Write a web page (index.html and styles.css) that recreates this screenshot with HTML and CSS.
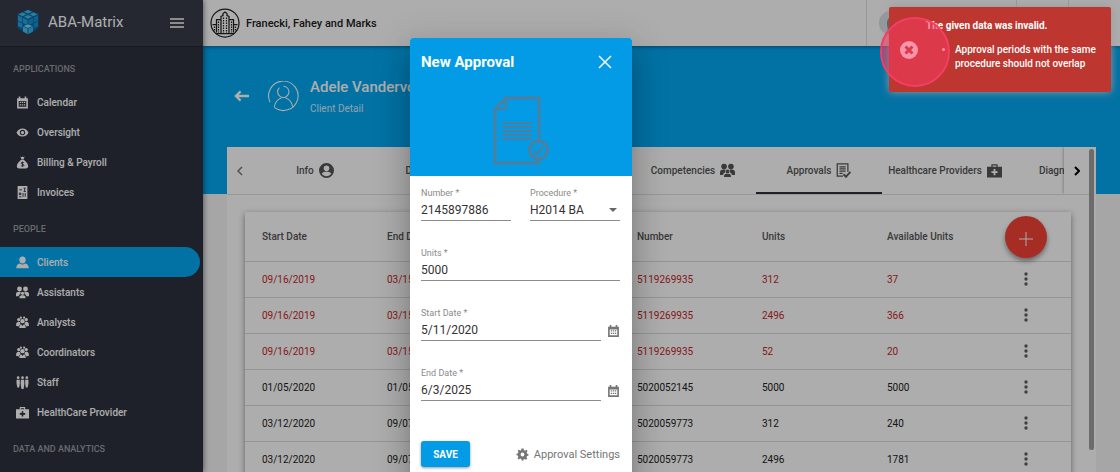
FILE: index.html
```html
<!DOCTYPE html>
<html lang="en">
<head>
  <meta charset="UTF-8" />
  <meta name="viewport" content="width=device-width, initial-scale=1.0"/>
  <title>ABA-Matrix - Client Detail</title>
  <link rel="stylesheet" href="styles.css">
</head>
<body>

  <!-- Icon set -->
  <svg class="icon-set" aria-hidden="true">
    <symbol id="i-calendar" viewBox="0 0 24 24">
      <path fill-rule="evenodd" d="M5 1h3v3h8V1h3v3h3v19H2V4h3zM5 9v11h14V9zM7 10.500h2.500v2.500H7zm3.800 0h2.500v2.500h-2.500zm3.800 0h2.500v2.500h-2.500zM7 15h2.500v2.500H7zm3.800 0h2.500v2.500h-2.500zm3.800 0h2.500v2.500h-2.500z"/>
    </symbol>
    <symbol id="i-eye" viewBox="0 0 24 24">
      <path fill-rule="evenodd" d="M12 4.500C7 4.500 2.700 7.600 1 12c1.700 4.400 6 7.500 11 7.500s9.300-3.100 11-7.500c-1.700-4.400-6-7.500-11-7.500zM12 17a5 5 0 1 1 0-10 5 5 0 0 1 0 10zm0-8a3 3 0 1 0 0 6 3 3 0 0 0 0-6z"/>
    </symbol>
    <symbol id="i-money" viewBox="0 0 24 24">
      <path d="M8 1l2 1.500L12 1l2 1.500L16 1l-2 5h-4zM9.500 7h5c5 4 8 8 8 12 0 3-2 4-4.500 4H6c-2.500 0-4.500-1-4.500-4 0-4 3-8 8-12z"/>
      <path d="M14.500 12.500c-1-1.200-5-1.400-5 .8 0 2.400 5.200 1.200 5.200 3.700 0 2.300-4.200 2.200-5.400.7M12 10.500v9.500" fill="none" stroke="#2d323e" stroke-width="1.600"/>
    </symbol>
    <symbol id="i-invoice" viewBox="0 0 24 24">
      <path d="M3 0h18v24H3z"/>
      <path d="M6 7h5M14 4h4M16 4v6M14 10h4M6 13h3v3H6zM13 13v7M17 13v7M6 20h4" fill="none" stroke="#2d323e" stroke-width="1.700"/>
    </symbol>
    <symbol id="i-person" viewBox="0 0 24 24">
      <path d="M12 1c4 0 6 3 6 6.500S15.500 14 12 14 6 11 6 7.500 8 1 12 1zM7 14c3 2.500 7 2.500 10 0 4 1 6.500 3 6.500 8.500H.5C.5 17 3 15 7 14z"/>
    </symbol>
    <symbol id="i-people" viewBox="0 0 24 24">
      <circle cx="6.500" cy="5.500" r="4.500"/><circle cx="17.500" cy="5.500" r="4.500"/>
      <path d="M0 19v-4c0-3 2-4.500 6-4.500 1 0 2 .2 3 .7a4 4 0 0 0-1 3.800c-2 .8-3 2-3 4zM24 19v-4c0-3-2-4.500-6-4.500-1 0-2 .2-3 .7a4 4 0 0 1 1 3.800c2 .8 3 2 3 4z"/>
      <circle cx="12" cy="13.500" r="3"/><path d="M6.500 22.500v-2c0-2.300 2-3.300 5.500-3.300s5.500 1 5.500 3.300v2z"/>
    </symbol>
    <symbol id="i-group" viewBox="0 0 24 24">
      <circle cx="5" cy="6.500" r="3"/><circle cx="19" cy="6.500" r="3"/><circle cx="12" cy="9.500" r="4"/>
      <circle cx="9" cy="3" r="2"/><circle cx="15" cy="3" r="2"/>
      <path d="M0 18c0-5 1.500-7.500 5-7.500 1 0 2 .3 2.500 1 0 2 .5 2.500 1 3.500-2 1-3 2.500-3.500 4.500zM24 18c0-5-1.500-7.500-5-7.500-1 0-2 .3-2.500 1 0 2-.5 2.500-1 3.500 2 1 3 2.500 3.500 4.500zM6 22c0-4 1.500-6.500 4-6.500l2 3 2-3c2.500 0 4 2.500 4 6.500z"/>
    </symbol>
    <symbol id="i-staff" viewBox="0 0 24 24">
      <circle cx="4" cy="3" r="2.500"/><circle cx="12" cy="3" r="2.500"/><circle cx="20" cy="3" r="2.500"/>
      <path d="M1 7h6v7l-1 7H2.500L1 14zM9 7h6l.5 7-1.500 10h-4L8.500 14zM17 7h6v7l-1.500 7H18l-1-7z"/>
    </symbol>
    <symbol id="i-medkit" viewBox="0 0 24 24">
      <path fill-rule="evenodd" d="M7 6V2h10v4h7v17H0V6zM9 6h6V4H9zM10.500 9.500v3.500H7v3h3.500v3.500h3V16H17v-3h-3.500V9.500z"/>
    </symbol>
    <symbol id="i-account" viewBox="0 0 24 24">
      <path fill-rule="evenodd" d="M12 0a12 12 0 1 0 0 24 12 12 0 0 0 0-24zm0 4a4.500 4.500 0 1 1 0 9 4.500 4.500 0 0 1 0-9zm0 17c-3 0-6-1.500-7.500-4 .5-2 4-3 7.500-3s7 1 7.500 3c-1.500 2.500-4.500 4-7.500 4z"/>
    </symbol>
    <symbol id="i-approvals" viewBox="0 0 24 24">
      <path d="M11 21H2V1.500h17V14M5.500 6h10M5.500 9.500h10M5.500 13h10M5.500 16.500h5" fill="none" stroke="currentColor" stroke-width="2"/>
      <path d="M12 18l4 4 7-8" fill="none" stroke="currentColor" stroke-width="3"/>
    </symbol>
    <symbol id="i-gear" viewBox="0 0 24 24">
      <path fill-rule="evenodd" d="M10 1h4l.6 3 2.200 1L19.300 3.300l2 2.400-1.600 2.500.9 2.300L23 11v3l-2.600.7-1 2.200 1.500 2.500-2.500 2.200-2.400-1.500-2 .9L13.500 23h-3l-.7-2.600-2.200-.9L5 21l-2.200-2.500 1.500-2.400-.9-2.100L1 13.500v-3l2.600-.7.9-2.200L3 5l2.300-2 2.500 1.500L9.600 4zM12 8.500a3.500 3.500 0 1 0 0 7 3.500 3.500 0 0 0 0-7z"/>
    </symbol>
    <symbol id="i-dots" viewBox="0 0 4 14">
      <circle cx="2" cy="2" r="1.700"/><circle cx="2" cy="7" r="1.700"/><circle cx="2" cy="12" r="1.700"/>
    </symbol>
  </svg>

  <div class="app">
    <!-- Sidebar -->
    <aside class="sidebar">
      <div class="brand">
        <svg class="brand-logo" viewBox="0 0 48 52">
          <path d="M24 1l21 9v28L24 51 3 38V10z" fill="#0a6ca5"/>
          <path d="M24 2l8 3.500-8 3.500-8-3.500zM13 7l8 3.500-8 4-8-4zM35 7l8 3.500-8 4-8-4zM24 12l8 3.500-8 4-8-4z" fill="#45b8ea"/>
          <path d="M4 13l8.500 4v10L4 23zM14 18l9 4v10l-9-4zM4 25l8.500 4v9L4 34z" fill="#2ba3df"/>
          <path d="M44 13l-8.500 4v10l8.500-4zM34 18l-9 4v10l9-4zM44 25l-8.500 4v9l8.500-4z" fill="#1b90cd"/>
          <path d="M14 35l9 4v11l-9-5z" fill="#49bff0"/><path d="M34 35l-9 4v11l9-5z" fill="#38b0e6"/><path d="M24 31l9 3-9 4-9-4z" fill="#7fd6f8"/>
        </svg>
        <span class="brand-name">ABA-Matrix</span>
        <button class="icon-btn menu-btn" aria-label="Toggle menu">
          <svg viewBox="0 0 14 10"><path d="M0 1h14M0 5h14M0 9h14" stroke="currentColor" stroke-width="1.500"/></svg>
        </button>
      </div>
      <nav>
        <h3>APPLICATIONS</h3>
        <a href="#"><svg><use href="#i-calendar"/></svg>Calendar</a>
        <a href="#"><svg><use href="#i-eye"/></svg>Oversight</a>
        <a href="#"><svg><use href="#i-money"/></svg>Billing &amp; Payroll</a>
        <a href="#"><svg><use href="#i-invoice"/></svg>Invoices</a>
        <h3>PEOPLE</h3>
        <a href="#" class="active"><svg><use href="#i-person"/></svg>Clients</a>
        <a href="#"><svg><use href="#i-people"/></svg>Assistants</a>
        <a href="#"><svg><use href="#i-group"/></svg>Analysts</a>
        <a href="#"><svg><use href="#i-group"/></svg>Coordinators</a>
        <a href="#"><svg><use href="#i-staff"/></svg>Staff</a>
        <a href="#"><svg><use href="#i-medkit"/></svg>HealthCare Provider</a>
        <h3>DATA AND ANALYTICS</h3>
      </nav>
    </aside>

    <div class="main">
      <!-- Toolbar -->
      <header class="toolbar">
        <svg class="company-logo" viewBox="0 0 60 60" fill="none" stroke="currentColor" stroke-width="2.500">
          <circle cx="30" cy="30" r="28"/>
          <path d="M22 52V17l4-2v-4l4-3 4 3v4l4 2v35M13 49V23h9M38 23h9v26M5 33h8M47 33h8M12 51h36"/>
          <path d="M27 19v33M33 19v33M17 27v22M43 27v22M9 37v8M51 37v8" stroke-dasharray="3 2"/>
        </svg>
        <span class="company">Franecki, Fahey and Marks</span>
        <div class="user"><span class="avatar"><svg viewBox="0 0 22 22"><path d="M8 20v-4C6 9 9 4 14 4s6 4 5 9l-2 7z" fill="#555"/></svg></span></div>
        <div class="tool"></div>
        <div class="tool"></div>
      </header>

      <!-- Client heading -->
      <section class="client">
        <button class="icon-btn back-btn" aria-label="Back">
          <svg viewBox="0 0 16 12" fill="none" stroke="currentColor" stroke-width="2.500"><path d="M16 6H2M7 1L2 6l5 5"/></svg>
        </button>
        <svg class="client-avatar" viewBox="0 0 60 60" fill="none" stroke="currentColor" stroke-width="2">
          <path d="M4 41A28.500 28.500 0 1 1 12 51"/>
          <path d="M22 13a11 11 0 1 0 8-3M12 50c2-9 7-15 14-17M34 33c7 2 12 8 14 17"/>
        </svg>
        <div>
          <h1>Adele Vandervort</h1>
          <p>Client Detail</p>
        </div>
      </section>

      <!-- Detail card -->
      <section class="card">
        <div class="card-body">
          <div class="tabs">
            <button class="page-btn prev" aria-label="Previous tabs"><svg viewBox="0 0 6 10"><path d="M5 1L1 5l4 4"/></svg></button>
            <div class="tab-list" role="tablist">
              <button class="tab" role="tab">Info<svg><use href="#i-account"/></svg></button>
              <button class="tab" role="tab">Documents<svg><use href="#i-invoice"/></svg></button>
              <button class="tab" role="tab">Caregivers<svg><use href="#i-people"/></svg></button>
              <button class="tab" role="tab">Competencies<svg><use href="#i-people"/></svg></button>
              <button class="tab selected" role="tab" aria-selected="true">Approvals<svg><use href="#i-approvals"/></svg></button>
              <button class="tab" role="tab">Healthcare Providers<svg><use href="#i-medkit"/></svg></button>
              <button class="tab" role="tab">Diagnosis<svg><use href="#i-medkit"/></svg></button>
            </div>
            <button class="page-btn next" aria-label="Next tabs"><svg viewBox="0 0 6 10"><path d="M1 1l4 4-4 4"/></svg></button>
          </div>

          <div class="table-card">
            <table>
              <thead>
                <tr><th>Start Date</th><th>End Date</th><th>Procedure</th><th>Number</th><th>Units</th><th>Available Units</th><th class="actions"></th></tr>
              </thead>
              <tbody>
                <tr class="expired"><td>09/16/2019</td><td>03/15/2020</td><td>H2019 BA</td><td>5119269935</td><td>312</td><td>37</td><td class="actions"><button class="icon-btn" aria-label="Row menu"><svg><use href="#i-dots"/></svg></button></td></tr>
                <tr class="expired"><td>09/16/2019</td><td>03/15/2020</td><td>H2014 BA</td><td>5119269935</td><td>2496</td><td>366</td><td class="actions"><button class="icon-btn" aria-label="Row menu"><svg><use href="#i-dots"/></svg></button></td></tr>
                <tr class="expired"><td>09/16/2019</td><td>03/15/2020</td><td>H2012 BA</td><td>5119269935</td><td>52</td><td>20</td><td class="actions"><button class="icon-btn" aria-label="Row menu"><svg><use href="#i-dots"/></svg></button></td></tr>
                <tr><td>01/05/2020</td><td>01/05/2021</td><td>H2014 BA</td><td>5020052145</td><td>5000</td><td>5000</td><td class="actions"><button class="icon-btn" aria-label="Row menu"><svg><use href="#i-dots"/></svg></button></td></tr>
                <tr><td>03/12/2020</td><td>09/07/2020</td><td>H2019 BA</td><td>5020059773</td><td>312</td><td>240</td><td class="actions"><button class="icon-btn" aria-label="Row menu"><svg><use href="#i-dots"/></svg></button></td></tr>
                <tr><td>03/12/2020</td><td>09/07/2020</td><td>H2014 BA</td><td>5020059773</td><td>2496</td><td>1781</td><td class="actions"><button class="icon-btn" aria-label="Row menu"><svg><use href="#i-dots"/></svg></button></td></tr>
              </tbody>
            </table>
            <button class="fab" aria-label="Add approval"><svg viewBox="0 0 14 14"><path d="M7 0v14M0 7h14" stroke="currentColor"/></svg></button>
          </div>
        </div>
        <div class="scrollbar"><div class="thumb"></div></div>
      </section>
    </div>
  </div>

  <div class="backdrop"></div>

  <!-- New approval dialog -->
  <div class="dialog" role="dialog" aria-labelledby="dialog-title">
    <div class="dialog-head">
      <div class="dialog-bar">
        <h2 id="dialog-title">New Approval</h2>
        <button class="icon-btn close-btn" aria-label="Close"><svg viewBox="0 0 14 14"><path d="M1 1l12 12M13 1L1 13" stroke="currentColor" stroke-width="1.500"/></svg></button>
      </div>
      <svg class="doc" viewBox="0 0 56 70" fill="none" stroke="currentColor" stroke-width="3">
        <path d="M38 67H2V13L13 2h33v42M46 61v6h-8"/>
        <path d="M3 13h10V3z" stroke-width="2"/>
        <path d="M9 27h30M9 31h30M9 35h30M9 39h30M9 43h30" stroke-width="2.200"/>
        <circle cx="45.500" cy="54" r="9"/><path d="M41 55l3 3 6-8" stroke-width="2.500"/>
      </svg>
    </div>
    <form class="dialog-form">
      <div class="field-row">
        <div class="field">
          <label for="number">Number *</label>
          <input id="number" type="text" value="2145897886">
        </div>
        <div class="field">
          <label for="procedure">Procedure *</label>
          <div class="select-wrap">
            <select id="procedure"><option>H2014 BA</option></select>
          </div>
        </div>
      </div>
      <div class="field">
        <label for="units">Units *</label>
        <input id="units" type="text" value="5000">
      </div>
      <div class="field">
        <label for="start">Start Date *</label>
        <div class="date-row">
          <input id="start" type="text" value="5/11/2020">
          <button type="button" class="icon-btn" aria-label="Pick start date"><svg><use href="#i-calendar"/></svg></button>
        </div>
      </div>
      <div class="field">
        <label for="end">End Date *</label>
        <div class="date-row">
          <input id="end" type="text" value="6/3/2025">
          <button type="button" class="icon-btn" aria-label="Pick end date"><svg><use href="#i-calendar"/></svg></button>
        </div>
      </div>
      <div class="dialog-actions">
        <button type="button" class="save">SAVE</button>
        <button type="button" class="settings"><svg><use href="#i-gear"/></svg>Approval Settings</button>
      </div>
    </form>
  </div>

  <!-- Error toast -->
  <div class="toast" role="alert">
    <strong>The given data was invalid.</strong>
    <ul><li>Approval periods with the same procedure should not overlap</li></ul>
    <svg class="toast-icon" viewBox="0 0 18 18"><circle cx="9" cy="9" r="9" fill="#fff"/><path d="M5.500 5.500l7 7M12.500 5.500l-7 7" stroke="#bd362f" stroke-width="3"/></svg>
    <span class="click-ring"></span>
  </div>

</body>
</html>
```

FILE: styles.css
```css
* { box-sizing: border-box; }

body {
  margin: 0;
  height: 100vh;
  overflow: hidden;
  position: relative;
  font-family: Roboto, "Liberation Sans", sans-serif;
  font-size: 10px;
  color: #212121;
  background: #f5f5f5;
}

h1, h2, h3, p, ul { margin: 0; padding: 0; }

button {
  font: inherit;
  color: inherit;
  border: none;
  background: none;
  padding: 0;
  cursor: pointer;
}

svg { fill: currentColor; display: block; }

.icon-set { position: absolute; width: 0; height: 0; }
.icon-btn { display: flex; align-items: center; justify-content: center; }

.app { display: flex; height: 100%; }

/* Sidebar */
.sidebar {
  flex: 0 0 203px;
  background: #2d323e;
  color: #fff;
  box-shadow: 0 0 6px rgba(0,0,0,0.6);
  z-index: 2;
  overflow: hidden;
}

.brand {
  display: flex;
  align-items: center;
  height: 47px;
  padding: 0 19px 3px 15px;
  background: #373c49;
  border-bottom: 1px solid #20242d;
}

.brand-logo { width: 26px; height: 26px; }
.brand-name { flex: 1; margin-left: 7px; font-size: 15px; }
.menu-btn svg { width: 14px; height: 10px; margin-top: 3px; }

nav { padding-top: 5px; }

nav h3 {
  height: 35px;
  line-height: 35px;
  padding-left: 13px;
  font-size: 9px;
  font-weight: 500;
  color: #9a9ca3;
}

nav a {
  display: flex;
  align-items: center;
  gap: 8px;
  height: 30px;
  margin-right: 3px;
  padding-left: 16px;
  font-weight: 500;
  color: #fff;
  text-decoration: none;
}

nav a + h3 { margin-top: 5px; }
nav a svg { width: 13px; height: 13px; }

nav .active {
  background: #03a9f4;
  border-radius: 0 15px 15px 0;
}

/* Toolbar */
.main { flex: 1; min-width: 0; display: flex; flex-direction: column; }

.toolbar {
  flex: 0 0 46px;
  display: flex;
  align-items: center;
  padding-left: 7px;
  background: #fff;
  box-shadow: 0 1px 4px rgba(0,0,0,0.4);
  z-index: 1;
}

.company-logo { width: 30px; height: 30px; fill: none; }
.company { flex: 1; margin-left: 6px; font-size: 11px; font-weight: 500; }
.user, .tool { height: 100%; border-left: 1px solid #e0e0e0; }
.user { display: flex; align-items: center; width: 150px; padding-left: 12px; }
.tool { width: 52px; }

.avatar {
  width: 24px;
  height: 24px;
  border-radius: 50%;
  background: #d9e0e8;
  overflow: hidden;
}

/* Client heading */
.client {
  flex: 0 0 148px;
  display: flex;
  align-items: flex-start;
  padding: 31px 31px 0;
  background: #03a9f4;
  color: #fff;
}

.back-btn { height: 38px; }
.back-btn svg { width: 15px; height: 12px; fill: none; }
.client-avatar { width: 31px; height: 31px; margin: 4px 11px 0 19px; fill: none; }
.client h1 { font-size: 15px; font-weight: 500; line-height: 20px; }
.client p { line-height: 24px; color: #d5eefb; }

/* Detail card */
.card {
  flex: 1;
  display: flex;
  min-height: 0;
  margin: -47px 24px 0;
  background: #fff;
}

.card-body { flex: 1; min-width: 0; overflow: hidden; }
.scrollbar { width: 7px; padding: 2px 2px 0 0; }
.thumb { height: 301px; border-radius: 3px; background: #9e9e9e; }

.tabs {
  display: flex;
  height: 48px;
  border-bottom: 1px solid #e0e0e0;
}

.page-btn {
  flex: 0 0 25px;
  display: flex;
  align-items: center;
  justify-content: center;
}

.page-btn svg {
  width: 6px;
  height: 10px;
  fill: none;
  stroke: #777;
  stroke-width: 1.5;
}

.page-btn.next { box-shadow: 0 0 3px rgba(0,0,0,0.4); clip-path: inset(0 0 0 -4px); }
.page-btn.next svg { stroke: #000; stroke-width: 2; }

.tab-list { flex: 1; display: flex; min-width: 0; overflow: hidden; }

.tab {
  flex: 0 0 126px;
  display: flex;
  align-items: center;
  justify-content: center;
  gap: 5px;
  font-weight: 500;
  color: #555;
  white-space: nowrap;
}

.tab svg { width: 15px; height: 15px; flex: none; }
.tab.selected { border-bottom: 2px solid #2d323e; padding-top: 2px; }

.table-card {
  position: relative;
  margin: 17px 18px 0;
  box-shadow: 0 2px 6px rgba(0,0,0,0.45);
}

table {
  width: 100%;
  border-collapse: collapse;
  table-layout: fixed;
}

th, td {
  height: 36px;
  padding: 0;
  text-align: left;
  border-bottom: 1px solid #dcdcdc;
}

th { height: 49px; font-weight: 500; color: #555; }
th:first-child, td:first-child { width: 142px; padding-left: 17px; }
.actions { width: 59px; }
td.actions svg { width: 4px; height: 14px; }
td.actions .icon-btn { width: 28px; height: 20px; }
.expired td { color: #c62828; }
td.actions, .expired td.actions { color: #616161; }

.fab {
  position: absolute;
  top: 4px;
  right: 24px;
  width: 42px;
  height: 42px;
  display: flex;
  align-items: center;
  justify-content: center;
  border-radius: 50%;
  background: #f44336;
  color: #fff;
  box-shadow: 0 3px 5px rgba(0,0,0,0.4);
}

.fab svg { width: 14px; height: 14px; margin-top: 3px; }

.backdrop {
  position: absolute;
  inset: 0;
  z-index: 5;
  background: rgba(0,0,0,0.32);
}

/* Dialog */
.dialog {
  position: absolute;
  top: 38px;
  left: 410px;
  width: 222px;
  z-index: 6;
  border-radius: 3px;
  background: #fff;
  overflow: hidden;
  box-shadow: 0 9px 12px -6px rgba(0,0,0,0.2), 0 19px 30px 2px rgba(0,0,0,0.14), 0 7px 36px 6px rgba(0,0,0,0.12);
}

.dialog-head {
  display: flex;
  flex-direction: column;
  align-items: center;
  height: 138px;
  background: #039be5;
  color: #fff;
}

.dialog-bar {
  display: flex;
  align-items: center;
  justify-content: space-between;
  width: 100%;
  height: 48px;
  padding: 0 20px 0 11px;
}

.dialog-bar h2 { font-size: 15px; font-weight: 700; }
.close-btn svg { width: 14px; height: 14px; }
.doc { width: 56px; height: 70px; margin-top: 10px; fill: none; color: #4f7f9f; }

.dialog-form {
  display: flex;
  flex-direction: column;
  gap: 26px;
  padding: 11px 12px 19px 11px;
}

.field-row { display: flex; gap: 19px; }
.field { flex: 1; min-width: 0; display: flex; flex-direction: column; gap: 1px; }
.field label { font-size: 9px; line-height: 12px; color: #8a8a8a; }

.field input, .field select {
  width: 100%;
  min-width: 0;
  height: 21px;
  padding: 0;
  border: none;
  border-bottom: 1px solid #8c8c8c;
  border-radius: 0;
  background: none;
  font-family: inherit;
  font-size: 12px;
  color: #333;
  outline: none;
  appearance: none;
}

.select-wrap { position: relative; }

.select-wrap::after {
  content: "";
  position: absolute;
  right: 3px;
  top: 8px;
  border: 4px solid transparent;
  border-top-color: #666;
  border-bottom: none;
  pointer-events: none;
}

.date-row { display: flex; align-items: center; gap: 6px; color: #757575; }
.date-row svg { width: 13px; height: 14px; }

.dialog-actions {
  display: flex;
  align-items: center;
  justify-content: space-between;
  margin-top: 14px;
}

.save {
  width: 49px;
  height: 26px;
  border-radius: 3px;
  background: #039be5;
  color: #fff;
  font-weight: 700;
  box-shadow: 0 1px 3px rgba(0,0,0,0.4);
}

.settings { display: flex; align-items: center; gap: 5px; font-size: 11px; color: #757575; }
.settings svg { width: 13px; height: 13px; }

/* Toast */
.toast {
  position: absolute;
  top: 7px;
  right: 9px;
  width: 222px;
  height: 85px;
  padding: 11px 8px 0 37px;
  z-index: 7;
  border-radius: 2px;
  background: #bd362f;
  color: #fff;
  box-shadow: 0 0 9px #999;
}

.toast strong { display: block; line-height: 16px; }

.toast ul {
  margin-top: 9px;
  padding-left: 29px;
  font-weight: 500;
  line-height: 14px;
}

.toast-icon { position: absolute; top: 34px; left: 11px; width: 18px; height: 18px; }

.click-ring {
  position: absolute;
  top: 10px;
  left: -9px;
  width: 70px;
  height: 70px;
  border: 2px solid #f63d62;
  border-radius: 50%;
  background: rgba(246,61,98,0.55);
}
```
